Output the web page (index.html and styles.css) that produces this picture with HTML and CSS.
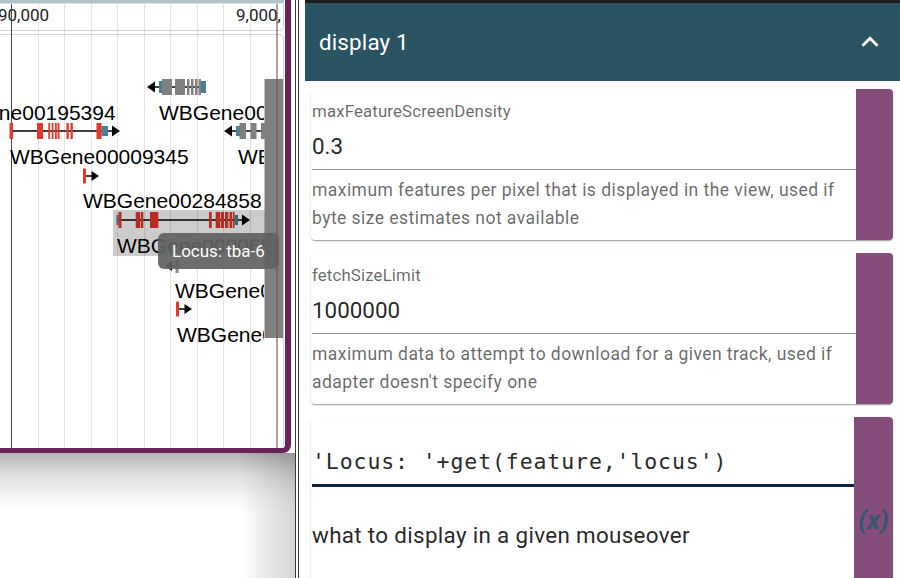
FILE: index.html
```html
<!DOCTYPE html>
<html>
<head>
<meta charset="utf-8">
<link rel="stylesheet" href="styles.css">
</head>
<body>
<div class="app">
  <div class="left">
    <div class="view">
      <svg class="canvas" width="285" height="448" viewBox="0 0 285 448">
        <defs>
          <clipPath id="lbl"><rect x="-80" y="0" width="344" height="448"/></clipPath>
        </defs>
        <path d="M0 0 H284 V0.5 Q284 3.5 281 3.5 H0 Z" fill="#b3c4c8"/>
        <g stroke="#e3e3e3" stroke-width="1">
          <line x1="38.5" y1="4" x2="38.5" y2="448"/>
          <line x1="64.5" y1="4" x2="64.5" y2="448"/>
          <line x1="91.5" y1="4" x2="91.5" y2="448"/>
          <line x1="117.5" y1="4" x2="117.5" y2="448"/>
          <line x1="144.5" y1="4" x2="144.5" y2="448"/>
          <line x1="170.5" y1="4" x2="170.5" y2="448"/>
          <line x1="197.5" y1="4" x2="197.5" y2="448"/>
          <line x1="223.5" y1="4" x2="223.5" y2="448"/>
          <line x1="250.5" y1="4" x2="250.5" y2="448"/>
        </g>
        <path d="M0 30.5 H279 Q283.5 30.5 283.5 26 V3" fill="none" stroke="#d2d2d2"/>
        <path d="M0 34.5 H279 Q283.5 34.5 283.5 39 V448" fill="none" stroke="#d2d2d2"/>
        <g stroke="#4a4a4a" stroke-width="1">
          <line x1="11.5" y1="4" x2="11.5" y2="448"/>
          <line x1="277" y1="4" x2="277" y2="448"/>
        </g>
        <g class="ruler">
          <text x="-2" y="21">90,000</text>
          <text x="236" y="21">9,000,</text>
        </g>

        <!-- gene A (reverse) -->
        <line x1="152" y1="87" x2="206" y2="87" stroke="#000" stroke-width="1.5"/>
        <polygon points="147,87 155,81.5 155,92.5" fill="#000"/>
        <rect x="159" y="81" width="3" height="12" fill="#4a7d96"/>
        <g fill="#808080">
          <rect x="162" y="79" width="10" height="16"/>
          <rect x="175" y="79" width="10" height="16"/>
          <rect x="187" y="79" width="2.5" height="16"/>
          <rect x="191" y="79" width="2.5" height="16"/>
          <rect x="195" y="79" width="2.5" height="16"/>
          <rect x="198.5" y="79" width="2.5" height="16"/>
        </g>
        <rect x="201" y="81" width="5" height="12" fill="#4a7d96"/>

        <!-- gene B -->
        <line x1="11" y1="131" x2="116" y2="131" stroke="#000" stroke-width="1.5"/>
        <polygon points="120,131 112,125.5 112,136.5" fill="#000"/>
        <g fill="#e7362b">
          <rect x="9.5" y="123" width="3.5" height="16"/>
          <rect x="37" y="123" width="6" height="16"/>
          <rect x="48.3" y="123" width="1.8" height="16"/>
          <rect x="51.7" y="123" width="1.8" height="16"/>
          <rect x="55" y="123" width="1.8" height="16"/>
          <rect x="57.5" y="123" width="2" height="16"/>
          <rect x="66.5" y="123" width="2.3" height="16"/>
          <rect x="70.5" y="123" width="2.3" height="16"/>
          <rect x="96.5" y="123" width="5" height="16"/>
        </g>
        <rect x="101.5" y="126" width="6.5" height="10" fill="#4a7d96"/>

        <!-- gene C (reverse) -->
        <line x1="228" y1="131" x2="265" y2="131" stroke="#000" stroke-width="1.5"/>
        <polygon points="224,131 232,125.5 232,136.5" fill="#000"/>
        <rect x="236" y="126" width="4" height="10" fill="#4a7d96"/>
        <g fill="#808080">
          <rect x="239.5" y="123" width="6.5" height="16"/>
          <rect x="250.5" y="123" width="6" height="16"/>
          <rect x="261" y="123" width="4" height="16"/>
        </g>

        <!-- gene E -->
        <line x1="86" y1="176" x2="95" y2="176" stroke="#000" stroke-width="1.5"/>
        <polygon points="99,176 91.5,171 91.5,181" fill="#000"/>
        <rect x="83" y="168.5" width="3" height="15" fill="#e7362b"/>

        <!-- gene G (selected) -->
        <line x1="118" y1="220" x2="246" y2="220" stroke="#000" stroke-width="1.5"/>
        <polygon points="250,220 242,214.5 242,225.5" fill="#000"/>
        <rect x="116.5" y="215" width="2" height="10" fill="#4a7d96"/>
        <g fill="#e7362b">
          <rect x="118.5" y="212" width="3" height="16"/>
          <rect x="135.7" y="212" width="4.3" height="16"/>
          <rect x="140.7" y="212" width="2.6" height="16"/>
          <rect x="150" y="212" width="8.3" height="16"/>
          <rect x="209" y="212" width="2.7" height="16"/>
          <rect x="215.7" y="212" width="4.3" height="16"/>
          <rect x="220.7" y="212" width="3.3" height="16"/>
          <rect x="225" y="212" width="3.3" height="16"/>
          <rect x="229.5" y="212" width="2.5" height="16"/>
          <rect x="232.7" y="212" width="1.8" height="16"/>
        </g>
        <rect x="234.5" y="215" width="3.5" height="10" fill="#4a7d96"/>

        <!-- gene K (under tooltip) -->
        <line x1="169" y1="266" x2="177" y2="266" stroke="#000" stroke-width="1.5"/>
        <polygon points="165,266 172,261 172,271" fill="#000"/>
        <rect x="175.5" y="259" width="3" height="14" fill="#8a8a8a"/>

        <!-- gene I -->
        <line x1="179" y1="309" x2="188" y2="309" stroke="#000" stroke-width="1.5"/>
        <polygon points="192,309 184.5,304 184.5,314" fill="#000"/>
        <rect x="176" y="301.5" width="3" height="15" fill="#e7362b"/>

        <g class="lbl" clip-path="url(#lbl)">
          <text x="159" y="119.5">WBGene00013829</text>
          <text x="-63" y="119.5">WBGene00195394</text>
          <text x="10" y="164">WBGene00009345</text>
          <text x="238" y="164">WBGene00003311</text>
          <text x="83" y="208">WBGene00284858</text>
          <text x="117" y="253">WBGene00006530</text>
          <text x="175" y="298">WBGene00001044</text>
          <text x="177" y="341.5">WBGene00022155</text>
        </g>

        <rect x="113" y="210" width="152" height="46" fill="rgba(0,0,0,0.2)"/>

        <rect x="264.5" y="79" width="18.5" height="259" fill="#808080"/>
        <line x1="277" y1="79" x2="277" y2="338" stroke="#555" stroke-width="1"/>
      </svg>
      <div class="tooltip">Locus: tba-6</div>
    </div>
    <div class="below"></div>
  </div>
  <div class="divider"></div>
  <div class="drawer">
    <div class="header">
      <span class="title">display 1</span>
      <svg class="chev" viewBox="0 0 24 24"><path d="M12 8l-6 6 1.41 1.41L12 10.83l4.59 4.58L18 14z"/></svg>
    </div>
    <div class="cards">
      <div class="card">
        <div class="card-body">
          <div class="label">maxFeatureScreenDensity</div>
          <div class="value">0.3</div>
          <div class="helper">maximum features per pixel that is displayed in the view, used if byte size estimates not available</div>
        </div>
        <div class="strip"></div>
      </div>
      <div class="card">
        <div class="card-body">
          <div class="label">fetchSizeLimit</div>
          <div class="value">1000000</div>
          <div class="helper">maximum data to attempt to download for a given track, used if adapter doesn't specify one</div>
        </div>
        <div class="strip"></div>
      </div>
      <div class="card callback">
        <div class="card-body">
          <div class="code">'Locus: '+get(feature,'locus')</div>
          <div class="desc">what to display in a given mouseover</div>
        </div>
        <div class="strip wide"><span class="fx">(x)</span></div>
      </div>
    </div>
  </div>
</div>
</body>
</html>
```

FILE: styles.css
```css
html, body {
  margin: 0;
  padding: 0;
  width: 900px;
  height: 578px;
  overflow: hidden;
  background: #fff;
}

.app {
  display: flex;
  height: 578px;
}

.left {
  width: 295px;
  flex: none;
  display: flex;
  flex-direction: column;
}

.view {
  position: relative;
  width: 285px;
  height: 448px;
  border-right: 6px solid #6a2160;
  border-bottom: 5px solid #6a2160;
  border-bottom-right-radius: 8px;
  overflow: hidden;
  background: #fff;
  flex: none;
}

.canvas {
  display: block;
}

.ruler text {
  font-family: Roboto, "Liberation Sans", sans-serif;
  font-size: 17px;
  fill: #222;
}

.lbl text {
  font-family: "Liberation Sans", Arial, sans-serif;
  font-size: 21px;
  fill: #000;
}

.tooltip {
  position: absolute;
  left: 158px;
  top: 233px;
  width: 107px;
  height: 36px;
  padding-left: 14px;
  border-radius: 6px;
  background: rgba(97, 97, 97, 0.92);
  color: #fff;
  font-family: Roboto, sans-serif;
  font-size: 17px;
  line-height: 36px;
  white-space: nowrap;
}

.below {
  flex: 1;
  background:
    linear-gradient(to bottom, rgba(0, 0, 0, 0.3), rgba(0, 0, 0, 0.12) 22px, rgba(0, 0, 0, 0.03) 45px, rgba(0, 0, 0, 0) 60px),
    linear-gradient(to right, rgba(0, 0, 0, 0) 240px, rgba(0, 0, 0, 0.17) 295px),
    #fff;
}

.divider {
  width: 10px;
  flex: none;
  background: linear-gradient(to right, #3a3a3a 0 1px, #fff 1px 3px, #3a3a3a 3px 4px, #fff 4px);
}

.drawer {
  flex: 1;
  min-width: 0;
  border-top: 3px solid #1d1d1d;
  display: flex;
  flex-direction: column;
  font-family: Roboto, sans-serif;
}

.header {
  height: 78px;
  flex: none;
  background: #2a5461;
  display: flex;
  align-items: center;
  justify-content: space-between;
  padding: 0 13px 0 14px;
  color: #fff;
}

.title {
  font-size: 22.4px;
  letter-spacing: 0.15px;
}

.chev {
  width: 34px;
  height: 34px;
  fill: #fff;
}

.cards {
  padding: 8px 7px 0 6px;
}

.card {
  display: flex;
  background: #fff;
  border-radius: 4px;
  overflow: hidden;
  margin-bottom: 13px;
  box-shadow: 0 2px 1px -1px rgba(0, 0, 0, 0.2), 0 1px 1px 0 rgba(0, 0, 0, 0.14), 0 1px 3px 0 rgba(0, 0, 0, 0.12);
}

.card-body {
  flex: 1;
  min-width: 0;
  padding: 12px 0 8px 1px;
}

.strip {
  width: 37px;
  flex: none;
  background: #844d7c;
}

.strip.wide {
  width: 39px;
  display: flex;
  align-items: center;
  justify-content: center;
}

.label {
  font-size: 16.8px;
  letter-spacing: 0.16px;
  line-height: 20px;
  color: rgba(0, 0, 0, 0.6);
}

.value {
  margin-top: 9px;
  font-size: 22.4px;
  line-height: 32px;
  color: rgba(0, 0, 0, 0.87);
  padding-bottom: 7px;
  border-bottom: 1px solid rgba(0, 0, 0, 0.42);
}

.helper {
  margin-top: 6px;
  font-size: 17.5px;
  letter-spacing: 0.45px;
  line-height: 28px;
  color: rgba(0, 0, 0, 0.6);
}

.callback {
  min-height: 206px;
}

.callback .card-body {
  padding-top: 29px;
}

.code {
  font-family: "DejaVu Sans Mono", monospace;
  font-size: 21.5px;
  letter-spacing: 0.9px;
  line-height: 32px;
  color: #2a2a2a;
  padding-bottom: 6px;
  border-bottom: 3px solid #0d233f;
  white-space: nowrap;
}

.desc {
  margin-top: 32px;
  font-size: 22.4px;
  letter-spacing: 0.33px;
  line-height: 32px;
  color: rgba(0, 0, 0, 0.87);
}

.fx {
  font-size: 26px;
  font-weight: bold;
  font-style: italic;
  color: #34566a;
}
```
